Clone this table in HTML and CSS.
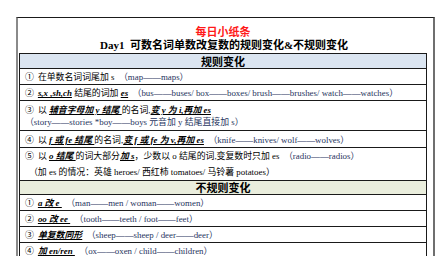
FILE: index.html
```html
<!DOCTYPE html>
<html lang="zh">
<head>
<meta charset="utf-8">
<link rel="stylesheet" href="styles.css">
</head>
<body>
<div class="sheet">
  <div class="title">每日小纸条</div>
  <div class="subtitle">Day1&nbsp; 可数名词单数改复数的规则变化&amp;不规则变化</div>
  <div class="table">
    <div class="head head-blue">规则变化</div>
    <div class="row"><span class="num">①</span>在单数名词词尾加 s&nbsp; <span class="en">（map——maps）</span></div>
    <div class="row"><span class="num">②</span><b class="em">s,x ,sh,ch</b> 结尾的词加 <b class="em">es</b>&nbsp; <span class="en">（bus——buses/ box——boxes/ brush——brushes/ watch——watches）</span></div>
    <div class="row row-two"><span class="num">③</span>以 <b class="em">辅音字母加 y 结尾 </b> 的名词,<b class="em">变 y 为 i,再加 es</b><br><span class="en">（story——stories *boy——boys 元音加 y 结尾直接加 s）</span></div>
    <div class="row row-four"><span class="num">④</span>以 <b class="em">f 或 fe 结尾 </b> 的名词,<b class="em">变 f 或 fe 为 v,再加 es</b>&nbsp; <span class="en">（knife——knives/ wolf——wolves）</span></div>
    <div class="row row-five"><span class="num">⑤</span>以 <b class="em">o 结尾 </b> 的词大部分<b class="em">加 s</b>，少数以 o 结尾的词,变复数时只加 es&nbsp; <span class="en">（radio——radios）</span><br><span class="indent">（加 es 的情况：英雄 heroes/ 西红柿 tomatoes/ 马铃薯 potatoes）</span></div>
    <div class="head head-green">不规则变化</div>
    <div class="row"><span class="num">①</span><b class="em">a 改 e </b>&nbsp; <span class="en">（man——men / woman——women）</span></div>
    <div class="row"><span class="num">②</span><b class="em">oo 改 ee </b>&nbsp; <span class="en">（tooth——teeth / foot——feet）</span></div>
    <div class="row"><span class="num">③</span><b class="em">单复数同形</b>&nbsp; <span class="en">（sheep——sheep / deer——deer）</span></div>
    <div class="row"><span class="num">④</span><b class="em">加 en/ren </b>&nbsp; <span class="en">（ox——oxen / child——children）</span></div>
  </div>
</div>
</body>
</html>
```

FILE: styles.css
```css
html, body {
  margin: 0;
  padding: 0;
  background: #ffffff;
}
body {
  width: 446px;
  height: 256px;
  overflow: hidden;
  font-family: "Liberation Serif", "Noto Sans CJK SC", serif;
  color: #000;
}
.sheet {
  margin: 17px 0 0 16px;
  width: 408px;
  border-top: 1px solid #1a1a1a;
  border-left: 2px solid #8a8a8a;
  border-right: 2px solid #6f6f6f;
  padding: 0 6px 0 1px;
  height: 238px;
  overflow: hidden;
}
.title {
  padding-top: 6px;
  height: 14px;
  line-height: 14px;
  text-align: center;
  color: #ff1a1a;
  font-weight: bold;
  font-size: 11px;
  font-family: "Noto Sans CJK SC", sans-serif;
}
.subtitle {
  height: 15px;
  line-height: 15px;
  text-align: center;
  font-weight: bold;
  font-size: 11px;
  padding-left: 2px;
}
.table {
  border: 1px solid #1a1a1a;
  border-bottom: none;
  font-size: 8.9px;
}
.head {
  height: 14px;
  line-height: 14px;
  text-align: center;
  font-weight: bold;
  font-size: 11px;
  font-family: "Noto Sans CJK SC", sans-serif;
  border-bottom: 1px solid #1a1a1a;
}
.head-blue { background: #dbe5f1; }
.head-green { background: #eaeedd; height: 13px; line-height: 13px; }
.row {
  line-height: 12px;
  padding: 2px 5px 1px;
  border-bottom: 1px solid #1a1a1a;
  white-space: nowrap;
}
.num {
  margin-right: 4px;
}
.row-two { padding: 3px 5px 2px 5px; }
.row-four { padding: 3px 5px 1px 5px; }
.row-five { line-height: 16px; padding: 0 5px; }
.indent { padding-left: 4px; }
.em {
  font-style: italic;
  font-weight: bold;
  text-decoration: underline;
}
.en {
  color: #1f3560;
}
```
